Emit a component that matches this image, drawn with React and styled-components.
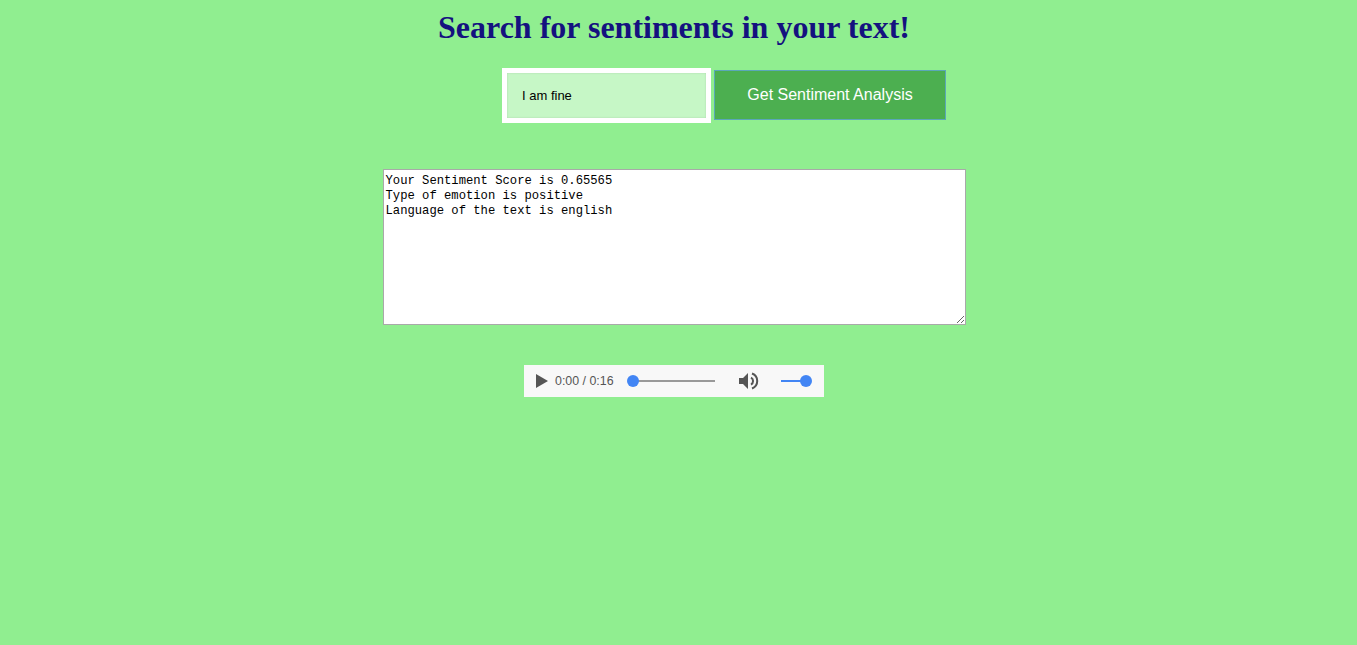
import React from "react";
import styled, { createGlobalStyle } from "styled-components";

const Global = createGlobalStyle`
  html, body { margin: 0; padding: 0; background: #90ee90; }
  body { font-family: "Liberation Serif", serif; }
`;

const Page = styled.div`
  display: flex;
  flex-direction: column;
  align-items: center;
  min-height: 645px;
  padding-right: 9px;
`;

const Title = styled.h1`
  margin: 9px 0 0 0;
  font-family: "Liberation Serif", "Times New Roman", serif;
  font-size: 32px;
  font-weight: bold;
  line-height: 37px;
  color: #14117f;
`;

const Form = styled.form`
  display: flex;
  align-items: center;
  gap: 3px;
  margin-top: 22px;
  padding-left: 100px;
`;

const Input = styled.input`
  box-sizing: border-box;
  width: 209px;
  height: 55px;
  border: 5px solid #ffffff;
  background: #c6f7c6;
  padding: 0 0 0 15px;
  font-family: "Liberation Sans", Arial, sans-serif;
  font-size: 13px;
  color: #000;
  outline: none;
  box-shadow: inset 0 0 2px rgba(0,0,0,0.15);
`;

const Button = styled.button`
  box-sizing: border-box;
  width: 232px;
  height: 50px;
  margin-top: -1px;
  background: #4caf50;
  border: 1px solid #5aa7b8;
  color: #ffffff;
  font-family: "Liberation Sans", Arial, sans-serif;
  font-size: 16px;
  cursor: pointer;
`;

const Output = styled.textarea`
  box-sizing: border-box;
  margin-top: 46px;
  width: 583px;
  height: 156px;
  border: 1px solid #a9a9a9;
  background: #ffffff;
  padding: 4px 2px 2px;
  font-family: "Liberation Mono", "DejaVu Sans Mono", monospace;
  font-size: 12.2px;
  line-height: 15px;
  color: #000;
  resize: both;
  outline: none;
`;

const Player = styled.div`
  margin-top: 40px;
  width: 300px;
  height: 32px;
  background: #f8f8f8;
  display: flex;
  align-items: center;
  padding: 0 12px 0 12px;
  box-sizing: border-box;
  font-family: "Liberation Sans", Arial, sans-serif;
`;

const Time = styled.span`
  font-size: 12.4px;
  color: #555;
  margin-left: 7px;
  white-space: nowrap;
`;

const Track = styled.div`
  position: relative;
  width: ${(p) => p.$w}px;
  height: 2px;
  background: ${(p) => p.$color};
  margin-left: ${(p) => p.$ml}px;
`;

const Thumb = styled.div`
  position: absolute;
  top: -5px;
  left: ${(p) => p.$left}px;
  width: 12px;
  height: 12px;
  border-radius: 50%;
  background: #4285f4;
`;

const Icon = styled.svg`
  display: block;
  flex: none;
  margin-left: ${(p) => p.$ml || 0}px;
`;

export default function App() {
  return (
    <>
      <Global />
      <Page>
        <Title>Search for sentiments in your text!</Title>
        <Form onSubmit={(e) => e.preventDefault()}>
          <Input defaultValue="I am fine" />
          <Button type="submit">Get Sentiment Analysis</Button>
        </Form>
        <Output
          readOnly
          value={"Your Sentiment Score is 0.65565\nType of emotion is positive\nLanguage of the text is english"}
        />
        <Player>
          <Icon width="12" height="14" viewBox="0 0 12 14">
            <path d="M0 0 L12 7 L0 14 Z" fill="#555" />
          </Icon>
          <Time>0:00 / 0:16</Time>
          <Track $w={82} $color="#999" $ml={19}>
            <Thumb $left={-6} />
          </Track>
          <Icon $ml={24} width="20" height="18" viewBox="0 0 20 18">
            <path d="M0 6 H4 L9 1 V17 L4 12 H0 Z" fill="#555" />
            <path d="M12 5.5 A4 4 0 0 1 12 12.5" stroke="#555" strokeWidth="2" fill="none" />
            <path d="M13 1.5 A8 8 0 0 1 13 16.5" stroke="#555" strokeWidth="2" fill="none" />
          </Icon>
          <Track $w={25} $color="#4285f4" $ml={22}>
            <Thumb $left={19} />
          </Track>
        </Player>
      </Page>
    </>
  );
}
